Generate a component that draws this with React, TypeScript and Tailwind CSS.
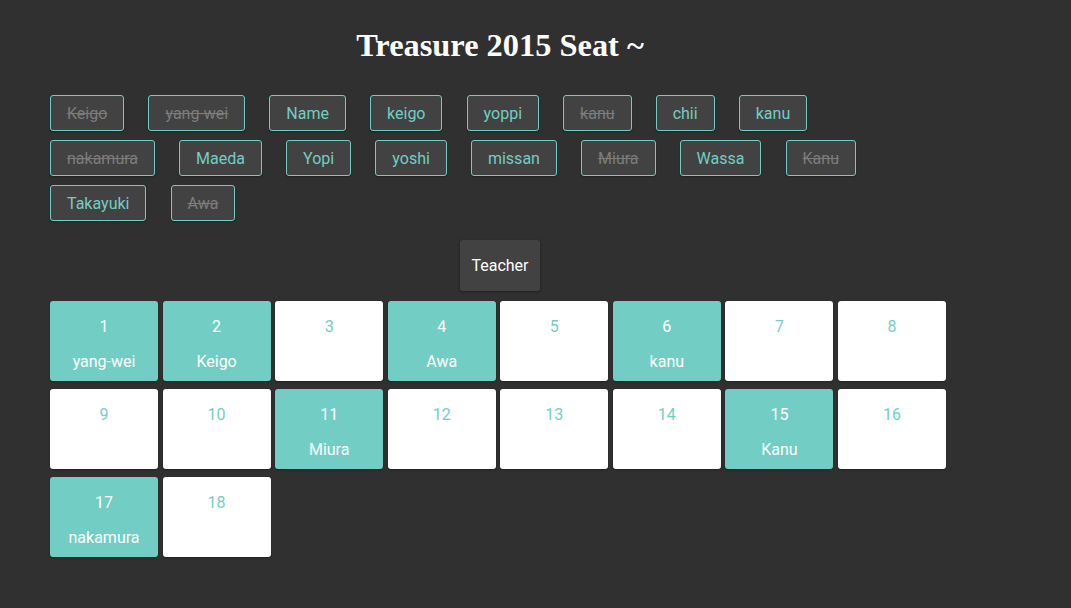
import React from "react";

const tags: { name: string; done: boolean }[] = [
  { name: "Keigo", done: true },
  { name: "yang-wei", done: true },
  { name: "Name", done: false },
  { name: "keigo", done: false },
  { name: "yoppi", done: false },
  { name: "kanu", done: true },
  { name: "chii", done: false },
  { name: "kanu", done: false },
  { name: "nakamura", done: true },
  { name: "Maeda", done: false },
  { name: "Yopi", done: false },
  { name: "yoshi", done: false },
  { name: "missan", done: false },
  { name: "Miura", done: true },
  { name: "Wassa", done: false },
  { name: "Kanu", done: true },
  { name: "Takayuki", done: false },
  { name: "Awa", done: true },
];

const seats: Record<number, string> = {
  1: "yang-wei",
  2: "Keigo",
  4: "Awa",
  6: "kanu",
  11: "Miura",
  15: "Kanu",
  17: "nakamura",
};

export default function App() {
  const nums = Array.from({ length: 18 }, (_, i) => i + 1);
  return (
    <div className="min-h-[608px] w-full bg-[#303030] font-['Roboto',sans-serif]">
      <div className="ml-[50px] w-[900px] pt-[27px]">
        <h1 className="text-center font-['Liberation_Serif',serif] text-[32.4px] font-bold leading-[36px] text-white">
          Treasure 2015 Seat ~
        </h1>
        <div className="mt-[32px] flex w-[840px] flex-wrap gap-x-[24.1px] gap-y-[9px]">
          {tags.map((t, i) => (
            <div
              key={i}
              className="flex h-[36px] items-center rounded-[3px] border border-[#72cec4] bg-[#424242] px-[16px] pt-[1px] text-[16px] shadow-[0_1px_2px_rgba(0,0,0,0.3)]"
            >
              <span className={t.done ? "text-[#7c7c7c] line-through" : "text-[#72cec4]"}>{t.name}</span>
            </div>
          ))}
        </div>
        <div className="mt-[19px] flex justify-center">
          <div className="flex h-[51px] w-[80px] items-center justify-center rounded-[3px] bg-[#424242] text-[16px] text-white shadow-[0_1px_3px_rgba(0,0,0,0.4)]">
            Teacher
          </div>
        </div>
        <div className="mt-[10px] grid w-[896px] grid-cols-8 gap-x-[4.5px] gap-y-[8px]">
          {nums.map((n) => {
            const name = seats[n];
            const filled = !!name;
            return (
              <div
                key={n}
                className={
                  "h-[80px] rounded-[3px] pt-[14px] text-center text-[16px] shadow-[0_1px_2px_rgba(0,0,0,0.3)] " +
                  (filled ? "bg-[#72cec4] text-white" : "bg-white text-[#72cec4]")
                }
              >
                <div className="leading-6">{n}</div>
                {filled && <div className="mt-[11px] leading-6">{name}</div>}
              </div>
            );
          })}
        </div>
      </div>
    </div>
  );
}
